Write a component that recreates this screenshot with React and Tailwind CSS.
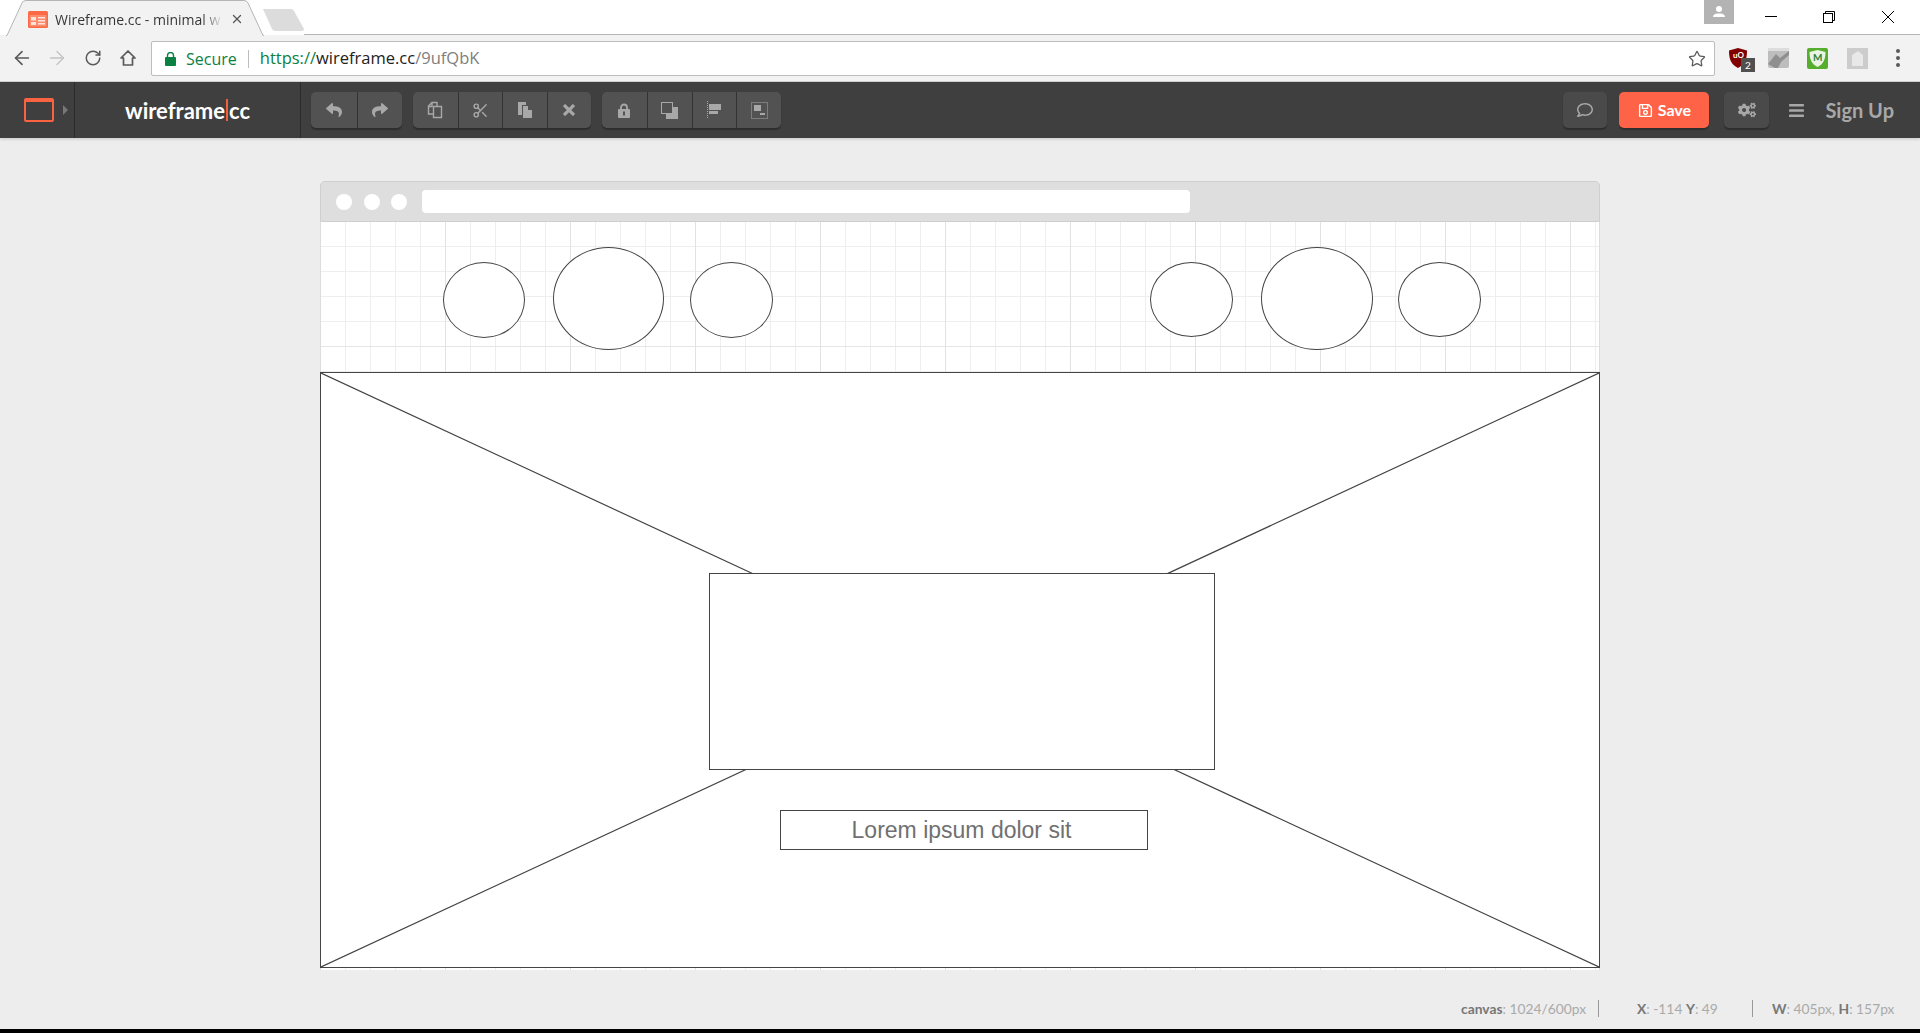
import React from "react";
import clsx from "clsx";
import { ArrowLeft, ArrowRight, RotateCw, Star, Scissors, X } from "lucide-react";
import { FaReply, FaShare, FaRegComment, FaRegSave, FaCogs, FaBars } from "react-icons/fa";

const CopyIcon = () => (
  <svg width="17" height="18" viewBox="0 0 17 18" fill="none" stroke="#a8a8a8" strokeWidth="1.4">
    <path d="M6 13H1.5V5L5 1.5h5V5" />
    <path d="M6.500 5.500h8v11h-8z" />
    <path d="M1.500 5.500H5V1.500" />
  </svg>
);

const PasteIcon = () => (
  <svg width="16" height="18" viewBox="0 0 16 18" fill="#a8a8a8">
    <path d="M1 1h8v3H5v10H1z" />
    <path d="M6 5h5v4h4v8H6z" />
  </svg>
);

const CloseIcon = () => (
  <svg width="12" height="12" viewBox="0 0 12 12" stroke="#a8a8a8" strokeWidth="3.2">
    <path d="M1 1l10 10M11 1L1 11" />
  </svg>
);

const LockIcon = () => (
  <svg width="12" height="15" viewBox="0 0 12 15">
    <path d="M3 6.500V4.500a3 3 0 0 1 6 0v2" fill="none" stroke="#a8a8a8" strokeWidth="1.800" />
    <rect y="6" width="12" height="9" rx="1" fill="#a8a8a8" />
    <rect x="5" y="8.500" width="2" height="4" fill="#525252" />
  </svg>
);

const BackIcon = () => (
  <svg width="17" height="17" viewBox="0 0 17 17">
    <rect x="5" y="5" width="12" height="12" fill="#a8a8a8" />
    <rect x="0.500" y="0.500" width="11" height="11" fill="#525252" stroke="#a8a8a8" />
  </svg>
);

const AlignIcon = () => (
  <svg width="14" height="18" viewBox="0 0 14 18" fill="#a8a8a8">
    <path d="M0.500 0v18" stroke="#a8a8a8" strokeDasharray="1 1" />
    <rect x="2" y="3" width="12" height="6" />
    <rect x="2" y="10" width="9" height="3" />
  </svg>
);

const GroupIcon = () => (
  <svg width="17" height="17" viewBox="0 0 17 17" fill="#a8a8a8">
    <rect x="0.500" y="0.500" width="16" height="16" fill="none" stroke="#a8a8a8" strokeDasharray="1 1" />
    <rect x="3" y="3" width="7" height="6" />
    <rect x="9" y="11" width="5" height="2" />
  </svg>
);

const HomeIcon = () => (
  <svg width="18" height="18" viewBox="0 0 18 18" fill="none" stroke="#5a5a5a" strokeWidth="1.700">
    <path d="M9 2L2 9h2.500v7h9V9H16z" strokeLinejoin="round" />
  </svg>
);

const Favicon = () => (
  <svg width="20" height="17" viewBox="0 0 20 17">
    <rect width="20" height="17" rx="1.500" fill="#fb6a45" />
    <rect x="1.500" y="4" width="17" height="11.500" fill="#fc8a6c" />
    <rect x="3" y="6" width="5" height="3.500" fill="#fde3da" />
    <rect x="3" y="11" width="5" height="3" fill="#fde3da" />
    <rect x="10" y="6" width="7" height="1.500" fill="#fde3da" />
    <rect x="10" y="9" width="7" height="1.500" fill="#fde3da" />
    <rect x="10" y="12" width="7" height="1.500" fill="#fde3da" />
  </svg>
);

// groupes de boutons de la barre d'outils
const ToolGroup = ({ items, cell }) => (
  <div className="flex h-[36px] rounded-[5px] bg-[#525252] shadow-[0_2px_1px_#2e2e2e]">
    {items.map((item, index) => (
      <div
        key={index}
        className={clsx("flex items-center justify-center", cell, index > 0 && "border-l border-[#333333]")}
      >
        {item}
      </div>
    ))}
  </div>
);

const circles = [
  "top-[40px] left-[122px] h-[76px] w-[82px]",
  "top-[25px] left-[232px] h-[103px] w-[111px]",
  "top-[40px] left-[369px] h-[76px] w-[83px]",
  "top-[40px] left-[829px] h-[75px] w-[83px]",
  "top-[25px] left-[940px] h-[103px] w-[112px]",
  "top-[40px] left-[1077px] h-[75px] w-[83px]",
];

const App = () => {
  return (
    <div className="flex h-[1033px] w-[1920px] flex-col overflow-hidden bg-[#ededed] font-['Lato',sans-serif]">
      {/* barre de titre */}
      <div className="flex h-[35px] shrink-0 bg-white">
        <div className="relative ml-[6px] h-[36px] w-[258px]">
          <svg className="absolute inset-0" width="258" height="36" viewBox="0 0 258 36">
            <path d="M0 35.500h1L16 3q1-2.500 4-2.500h218q3 0 4 2.500l15 32.500h1v1H0z" fill="#f2f2f2" />
            <path d="M0 35.500h1L16 3q1-2.500 4-2.500h218q3 0 4 2.500l15 32.500h1" fill="none" stroke="#b5b5b5" />
          </svg>
          <div className="relative flex h-full items-center pt-[2px] pl-[22px]">
            <Favicon />
            <span className="ml-[7px] w-[167px] bg-[linear-gradient(90deg,#333333_88%,#e8e8e8)] bg-clip-text font-['Open_Sans',sans-serif] text-[14px] whitespace-nowrap text-transparent">
              Wireframe.cc - minimal w
            </span>
            <X size={14} strokeWidth={2.2} className="ml-[8px] text-[#555555]" />
          </div>
        </div>
        <svg className="mt-[9px] -ml-px" width="41" height="22" viewBox="0 0 41 22">
          <path d="M0 0h28q2 0 3 2l10 18q0 2-2 2H12q-2 0-3-2z" fill="#dcdcdc" />
        </svg>
        <div className="flex-1 border-b border-[#b5b5b5]" />
      </div>
      <div className="relative">
        {/* contrôles de la fenêtre */}
        <div className="absolute -top-[35px] right-0 flex h-[24px] items-start">
          <div className="mr-[31px] flex h-[24px] w-[30px] items-center justify-center bg-[#b3b3b3]">
            <svg width="12" height="12" viewBox="0 0 12 12" fill="white">
              <circle cx="6" cy="3" r="3" />
              <path d="M0 11q0-3 4-3.500h4q4 .5 4 3.500z" />
            </svg>
          </div>
          <span className="mt-[16px] mr-[46px] h-px w-[12px] bg-black" />
          <svg className="mt-[11px] mr-[47px]" width="12" height="12" viewBox="0 0 12 12" fill="none" stroke="#000">
            <rect x="0.500" y="2.500" width="9" height="9" />
            <path d="M2.500 2.500v-2h9v9h-2" />
          </svg>
          <svg className="mt-[11px] mr-[26px]" width="12" height="12" viewBox="0 0 12 12" stroke="#000">
            <path d="M0 0l12 12M12 0L0 12" />
          </svg>
        </div>
      </div>

      {/* barre d'adresse */}
      <div className="flex h-[47px] shrink-0 items-center border-b border-[#cfcfcf] bg-[#f2f2f2]">
        <ArrowLeft size={22} strokeWidth={1.8} className="ml-[11px] text-[#5a5a5a]" />
        <ArrowRight size={22} strokeWidth={1.5} className="ml-[13px] text-[#c4c4c4]" />
        <RotateCw size={18} strokeWidth={2} className="ml-[16px] text-[#5a5a5a]" />
        <div className="ml-[17px]">
          <HomeIcon />
        </div>
        <div className="ml-[14px] flex h-[35px] w-[1564px] items-center rounded-[2px] border border-[#bdbdbd] bg-white pt-[1px] font-['Open_Sans',sans-serif] text-[16px]">
          <svg className="ml-[13px]" width="11" height="14" viewBox="0 0 11 14" fill="#0b8043">
            <rect y="5" width="11" height="9" rx="1" />
            <path d="M2.500 5V3.500a3 3 0 0 1 6 0V5" fill="none" stroke="#0b8043" strokeWidth="1.400" />
          </svg>
          <span className="ml-[10px] text-[#0b8043]">Secure</span>
          <span className="mx-[11px] h-[18px] w-px bg-[#bdbdbd]" />
          <span className="text-[16.500px] whitespace-nowrap text-[#0b8043]">
            https://<span className="text-[#222222]">wireframe.cc</span>
            <span className="text-[#808080]">/9ufQbK</span>
          </span>
          <Star size={18} strokeWidth={1.7} className="mr-[8px] ml-auto text-[#5a5a5a]" />
        </div>
        {/* extensions */}
        <div className="relative ml-[14px] flex h-[22px] w-[18px] items-center justify-center">
          <svg width="18" height="20" viewBox="0 0 18 20">
            <path d="M9 0l9 2.500c0 9-2 14-9 17.500C2 16.500 0 11.500 0 2.500z" fill="#800000" />
          </svg>
          <span className="absolute top-[3px] left-[4px] text-[8px] leading-[10px] font-bold text-white">uO</span>
          <span className="absolute top-[11px] left-[12px] flex h-[14px] w-[14px] items-center justify-center bg-[#505050] text-[10px] text-white">2</span>
        </div>
        <svg className="ml-[21px]" width="21" height="20" viewBox="0 0 21 20">
          <rect width="21" height="20" rx="2" fill="#bdbdbd" />
          <path d="M0 16L8 6l4 4 9-7v4l-8 7-3 6H7z" fill="#8f8f8f" />
          <rect width="21" height="3" fill="#dddddd" />
        </svg>
        <div className="relative ml-[18px] flex h-[21px] w-[21px] items-center justify-center">
          <svg width="21" height="21" viewBox="0 0 21 21">
            <rect width="21" height="21" rx="2" fill="#57ad2e" />
            <path d="M10.500 2l8 2c0 7-2 12-8 15C4.500 16 2.500 11 2.500 4z" fill="#e9f4e3" />
          </svg>
          <span className="absolute top-[4px] left-[6px] text-[10px] leading-[11px] font-bold text-[#2f7f3a]">M</span>
        </div>
        <svg className="ml-[19px]" width="21" height="21" viewBox="0 0 21 21">
          <rect width="21" height="21" fill="#cccccc" />
          <path d="M5 7l6-4 5 4v11H5z" fill="#e8e8e8" />
        </svg>
        <div className="ml-[28px] flex flex-col gap-[3px]">
          <span className="h-[4px] w-[4px] rounded-full bg-[#5a5a5a]" />
          <span className="h-[4px] w-[4px] rounded-full bg-[#5a5a5a]" />
          <span className="h-[4px] w-[4px] rounded-full bg-[#5a5a5a]" />
        </div>
      </div>

      {/* barre d'outils wireframe */}
      <div className="flex h-[56px] shrink-0 items-center bg-[#3f3f3f] shadow-[0_2px_2px_#d6d6d6]">
        <div className="flex h-full w-[75px] items-center border-r border-[#2b2b2b] pl-[24px]">
          <div className="h-[24px] w-[30px] rounded-[2px] border-[2px] border-t-[4px] border-[#fb6242]" />
          <span className="ml-[9px] h-0 w-0 border-y-[5px] border-l-[5px] border-y-transparent border-l-[#777777]" />
        </div>
        <div className="flex h-full w-[226px] items-center justify-center border-r border-[#2b2b2b] text-[22px] font-bold text-white">
          wireframe<span className="mx-[1px] h-[22px] w-[2px] bg-[#f0603c]" />cc
        </div>
        <div className="ml-[10px] flex items-center gap-[11px] text-[#a8a8a8]">
          <ToolGroup cell="w-[45.5px]" items={[<FaReply size={16} />, <FaShare size={16} />]} />
          <ToolGroup cell="w-[44.5px]" items={[<CopyIcon />, <Scissors size={17} />, <PasteIcon />, <CloseIcon />]} />
          <ToolGroup cell="w-[44.75px]" items={[<LockIcon />, <BackIcon />, <AlignIcon />, <GroupIcon />]} />
        </div>
        <div className="ml-auto flex items-center">
          <div className="flex h-[36px] w-[44px] items-center justify-center rounded-[5px] bg-[#4a4a4a] text-[#a8a8a8] shadow-[0_2px_1px_#2e2e2e]">
            <FaRegComment size={16} />
          </div>
          <div className="ml-[12px] flex h-[36px] w-[90px] items-center justify-center gap-[5px] rounded-[5px] bg-[#ff6347] text-[16px] font-bold text-white shadow-[0_2px_1px_#2e2e2e]">
            <FaRegSave size={15} />
            Save
          </div>
          <div className="ml-[15px] flex h-[36px] w-[45px] items-center justify-center rounded-[5px] bg-[#4a4a4a] text-[#a8a8a8] shadow-[0_2px_1px_#2e2e2e]">
            <FaCogs size={18} />
          </div>
          <FaBars size={17} className="ml-[19px] text-[#a8a8a8]" />
          <span className="mr-[26px] ml-[20px] text-[20px] font-bold text-[#a8a8a8]">Sign Up</span>
        </div>
      </div>

      {/* zone de dessin */}
      <div className="min-h-0 flex-1 pt-[43px] pl-[320px]">
        <div className="w-[1280px]">
          <div className="flex h-[41px] items-center rounded-t-[5px] border border-[#cfcfcf] bg-[#dedede] pl-[15px]">
            <span className="h-[16px] w-[16px] rounded-full bg-white" />
            <span className="ml-[12px] h-[16px] w-[16px] rounded-full bg-white" />
            <span className="ml-[11px] h-[16px] w-[16px] rounded-full bg-white" />
            <span className="ml-[15px] h-[23px] w-[768px] rounded-[4px] bg-white" />
          </div>
          <div className="relative h-[748px] border-x border-[#dddddd] bg-white bg-[linear-gradient(to_right,#e2e2e2_1px,transparent_1px),linear-gradient(to_bottom,#e6e6e6_1px,transparent_1px),linear-gradient(to_right,#eeeeee_1px,transparent_1px),linear-gradient(to_bottom,#eeeeee_1px,transparent_1px)] bg-[size:125px_125px,125px_125px,25px_25px,25px_25px] bg-[position:-1px_0,0_124px,-1px_0,0_24px]">
            {circles.map((c, index) => (
              <div key={index} className={clsx("absolute rounded-[50%] border border-[#444444] bg-white", c)} />
            ))}
            <div className="absolute top-[150px] -left-px h-[596px] w-[1280px] border border-[#444444] bg-white">
              <svg className="absolute inset-0" width="1278" height="594" viewBox="0 0 1278 594" stroke="#444444" strokeWidth="1.200">
                <path d="M0 0L1278 594M1278 0L0 594" />
              </svg>
            </div>
            <div className="absolute top-[351px] left-[388px] h-[197px] w-[506px] border border-[#444444] bg-white" />
            <div className="absolute top-[588px] left-[459px] flex h-[40px] w-[368px] items-center justify-center border border-[#444444] bg-white pr-[5px] font-['Liberation_Sans',sans-serif] text-[23px] text-[#707070]">
              Lorem ipsum dolor sit
            </div>
          </div>
        </div>
      </div>

      {/* barre d'état */}
      <div className="flex h-[17px] shrink-0 items-center text-[13.800px] leading-[17px] text-[#aaaaaa]">
        <span className="ml-[1461px] w-[138px] border-r border-[#999999] whitespace-nowrap">
          <b className="text-[#777777]">canvas</b>: 1024/600px
        </span>
        <span className="ml-[38px] w-[116px] border-r border-[#999999] whitespace-nowrap">
          <b className="text-[#777777]">X</b>: -114 <b className="text-[#777777]">Y</b>: 49
        </span>
        <span className="ml-[19px] whitespace-nowrap">
          <b className="text-[#777777]">W</b>: 405px, <b className="text-[#777777]">H</b>: 157px
        </span>
      </div>
      <div className="mt-[12px] h-[4px] shrink-0 bg-black" />
    </div>
  );
};

export default App;
